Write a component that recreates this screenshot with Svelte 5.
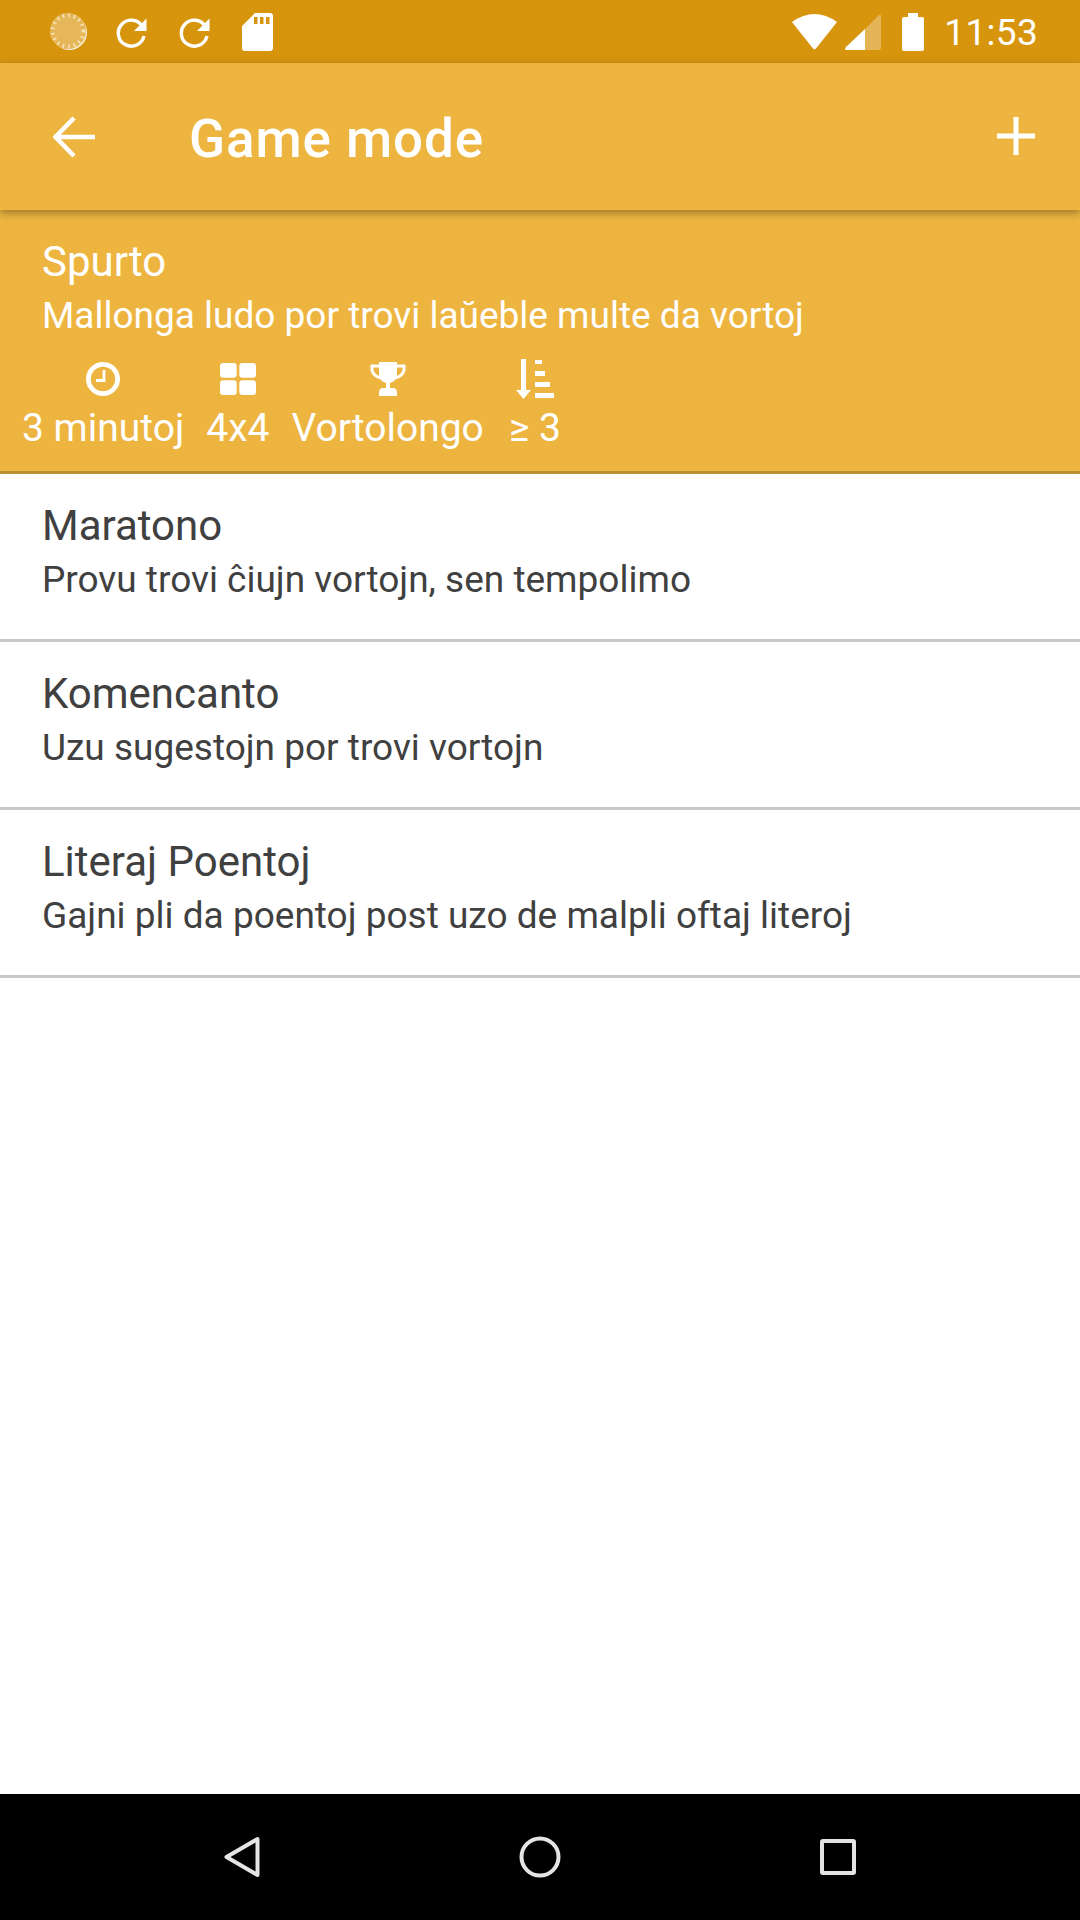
<script>
  const modes = [
    { name: "Maratono", desc: "Provu trovi ĉiujn vortojn, sen tempolimo" },
    { name: "Komencanto", desc: "Uzu sugestojn por trovi vortojn" },
    { name: "Literaj Poentoj", desc: "Gajni pli da poentoj post uzo de malpli oftaj literoj" }
  ];
</script>

<div class="screen">
  <div class="status">
    <div class="status-left">
      <svg class="disc" width="38" height="38" viewBox="0 0 38 38">
        <circle cx="19.5" cy="19.5" r="17.5" fill="#fff" opacity="0.85" />
        <circle cx="18" cy="18" r="18" fill="#e5b75a" />
        <circle cx="18" cy="18" r="15.5" fill="none" stroke="#f6e3b8" stroke-width="4" stroke-dasharray="1.6 4" />
      </svg>
      <svg class="refresh" width="31" height="31" viewBox="0 0 31 31">
        <path d="M26.5 9.5A13 13 0 1 0 28 19" fill="none" stroke="#fff" stroke-width="3.4" />
        <path d="M30.5 1.5V14H18z" fill="#fff" />
      </svg>
      <svg class="refresh" width="31" height="31" viewBox="0 0 31 31">
        <path d="M26.5 9.5A13 13 0 1 0 28 19" fill="none" stroke="#fff" stroke-width="3.4" />
        <path d="M30.5 1.5V14H18z" fill="#fff" />
      </svg>
      <svg class="sd" width="31" height="38" viewBox="0 0 31 38">
        <path fill-rule="evenodd" fill="#fff" d="M13 0H28a3 3 0 0 1 3 3V35a3 3 0 0 1-3 3H3a3 3 0 0 1-3-3V13zM12 4V11H15.5V4zM18 4V11H21.5V4zM24 4V11H27.5V4z" />
      </svg>
    </div>
    <div class="status-right">
      <svg width="45" height="37" viewBox="0 0 45 37">
        <path fill="#fff" d="M0 9Q22.500-7 45 9L24 35.500Q22.500 37 21 35.500z" />
      </svg>
      <svg class="signal" width="36" height="36" viewBox="0 0 36 36">
        <path fill="#fff" opacity="0.3" d="M20 15 34 1Q36 0 36 2V34a2 2 0 0 1-2 2H20z" />
        <path fill="#fff" d="M20 15V36H1Q-1 35 1 33z" />
      </svg>
      <svg class="battery" width="22" height="38" viewBox="0 0 22 38">
        <path fill="#fff" d="M6 0H16V4H20a2 2 0 0 1 2 2V36a2 2 0 0 1-2 2H2a2 2 0 0 1-2-2V6a2 2 0 0 1 2-2H6z" />
      </svg>
      <span class="time">11:53</span>
    </div>
  </div>

  <header class="appbar">
    <svg class="back" width="42" height="42" viewBox="0 0 42 42">
      <path d="M42 21H3M21 2 2.500 21 21 40" fill="none" stroke="#fff" stroke-width="4.500" />
    </svg>
    <h1>Game mode</h1>
    <svg class="add" width="38" height="38" viewBox="0 0 38 38">
      <path d="M19 0V38M0 19H38" fill="none" stroke="#fff" stroke-width="5" />
    </svg>
  </header>

  <main class="list">
    <div class="row selected">
      <div class="name">Spurto</div>
      <div class="desc">Mallonga ludo por trovi laŭeble multe da vortoj</div>
      <div class="stats">
        <div class="stat">
          <svg width="34" height="34" viewBox="0 0 34 34">
            <circle cx="17" cy="17" r="14.600" fill="none" stroke="#fff" stroke-width="4.800" />
            <path d="M18 8V18.500H10" fill="none" stroke="#fff" stroke-width="2.800" />
          </svg>
          <span>3 minutoj</span>
        </div>
        <div class="stat">
          <svg width="36" height="32" viewBox="0 0 36 32">
            <rect width="16.700" height="14.700" rx="3" fill="#fff" />
            <rect x="19.300" width="16.700" height="14.700" rx="3" fill="#fff" />
            <rect y="17.300" width="16.700" height="14.700" rx="3" fill="#fff" />
            <rect x="19.300" y="17.300" width="16.700" height="14.700" rx="3" fill="#fff" />
          </svg>
          <span>4x4</span>
        </div>
        <div class="stat">
          <svg width="36" height="34" viewBox="0 0 36 34">
            <path fill="#fff" d="M9 0H27V12Q27 19 20 21V26H24Q27 27 27 31V34H9V31Q9 27 12 26H16V21Q9 19 9 12z" />
            <path d="M9 4H2V8Q3 14 11 16M27 4H34V8Q33 14 25 16" fill="none" stroke="#fff" stroke-width="3" />
          </svg>
          <span>Vortolongo</span>
        </div>
        <div class="stat">
          <svg width="38" height="40" viewBox="0 0 38 40">
            <path fill="#fff" d="M5 0H10V31H15L7.500 40 0 31H5z" />
            <path fill="#fff" d="M19 1H26V5H19zM19 12H29V17H19zM19 23H34V28H19zM19 34H38V39H19z" />
          </svg>
          <span>≥ 3</span>
        </div>
      </div>
    </div>
    {#each modes as mode}
      <div class="row">
        <div class="name">{mode.name}</div>
        <div class="desc">{mode.desc}</div>
      </div>
    {/each}
  </main>

  <nav class="navbar">
    <svg width="36" height="42" viewBox="0 0 36 42">
      <path d="M33.500 3V39L2.500 21z" fill="none" stroke="#e4e4e4" stroke-width="4" stroke-linejoin="round" />
    </svg>
    <svg width="42" height="42" viewBox="0 0 42 42">
      <circle cx="21" cy="21" r="18.500" fill="none" stroke="#e4e4e4" stroke-width="4" />
    </svg>
    <svg width="36" height="36" viewBox="0 0 36 36">
      <rect x="2" y="2" width="32" height="32" rx="1" fill="none" stroke="#e4e4e4" stroke-width="4" />
    </svg>
  </nav>
</div>

<style>
  :global(body) {
    margin: 0;
    background: #fff;
  }

  .screen {
    width: 1080px;
    height: 1920px;
    display: flex;
    flex-direction: column;
    font-family: Roboto, "Noto Sans", sans-serif;
    overflow: hidden;
  }

  svg {
    display: block;
    flex: none;
  }

  .status {
    height: 63px;
    background: #d7950e;
    display: flex;
    align-items: center;
    justify-content: space-between;
    padding: 0 42px 0 50px;
    flex: none;
  }

  .status-left,
  .status-right {
    display: flex;
    align-items: center;
  }

  .refresh {
    margin-left: 28px;
    margin-top: 1px;
  }

  .refresh + .refresh {
    margin-left: 32px;
  }

  .sd {
    margin-left: 32px;
  }

  .signal {
    margin-left: 8px;
  }

  .battery {
    margin-left: 21px;
  }

  .time {
    margin-left: 20px;
    margin-top: 2px;
    color: #fff;
    font-size: 37px;
    letter-spacing: 0.3px;
  }

  .appbar {
    height: 147px;
    background: #edb540;
    display: flex;
    align-items: center;
    padding: 0 45px 0 53px;
    box-shadow: 0 3px 8px rgba(0, 0, 0, 0.35);
    position: relative;
    flex: none;
  }

  .appbar h1 {
    margin: 4px 0 0 94px;
    flex: 1;
    color: #fff;
    font-size: 53px;
    font-weight: 500;
    letter-spacing: 0.9px;
  }

  .add {
    margin-bottom: 2px;
  }

  .list {
    flex: 1;
  }

  .row {
    height: 168px;
    box-sizing: border-box;
    padding: 27px 42px 0;
    border-bottom: 3px solid #c8c8c8;
    color: #404040;
  }

  .row.selected {
    height: 264px;
    background: #edb540;
    border-bottom-color: #b8922f;
    color: #fff;
  }

  .name {
    font-size: 42px;
    line-height: 50px;
  }

  .desc {
    font-size: 37px;
    line-height: 48px;
    margin-top: 5px;
  }

  .stats {
    display: flex;
    gap: 22px;
    margin: 19px 0 0 -20px;
    align-items: flex-start;
  }

  .stat {
    display: flex;
    flex-direction: column;
    align-items: center;
    height: 88px;
  }

  .stat:last-child {
    margin-left: 3px;
  }

  .stat svg {
    height: 40px;
    margin-bottom: 6px;
  }

  .stat span {
    font-size: 39px;
    line-height: 46px;
  }

  .navbar {
    height: 126px;
    background: #000;
    flex: none;
    display: flex;
    align-items: center;
    justify-content: space-between;
    padding: 0 224px;
  }
</style>
